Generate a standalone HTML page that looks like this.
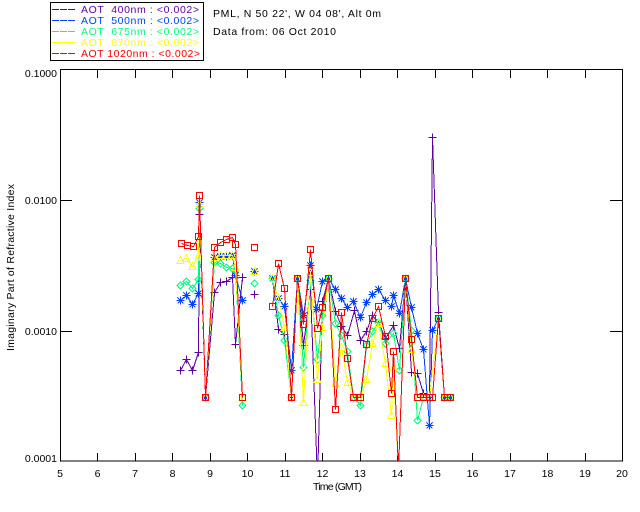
<!DOCTYPE html>
<html>
<head>
<meta charset="utf-8">
<style>
html,body{margin:0;padding:0;background:#fff;width:640px;height:512px;overflow:hidden}
svg{display:block;shape-rendering:crispEdges}
text{font-family:"Liberation Sans",sans-serif;font-size:10.5px;fill:#000;white-space:pre}
.d{fill:none;stroke-width:1}
</style>
</head>
<body>
<svg width="640" height="512" viewBox="0 0 640 512" xmlns="http://www.w3.org/2000/svg">
<defs>
<clipPath id="c"><rect x="60" y="70" width="562" height="391"/></clipPath>
<marker id="mp" markerUnits="userSpaceOnUse" markerWidth="11" markerHeight="11" refX="5.5" refY="5.5" overflow="visible"><path d="M1.5 5.5H9.5M5.5 1.5V9.5" fill="none" stroke="#5c00a0" stroke-width="1"/></marker>
<marker id="mb" markerUnits="userSpaceOnUse" markerWidth="11" markerHeight="11" refX="5.5" refY="5.5" overflow="visible"><path d="M1.5 5.5H9.5M5.5 1.5V9.5M2.5 2.5L8.5 8.5M8.5 2.5L2.5 8.5" fill="none" stroke="#0040ff" stroke-width="1"/></marker>
<marker id="mg" markerUnits="userSpaceOnUse" markerWidth="11" markerHeight="11" refX="5.5" refY="5.5" overflow="visible"><path d="M5.5 2L9 5.5L5.5 9L2 5.5Z" fill="none" stroke="#00ff80" stroke-width="1"/></marker>
<marker id="my" markerUnits="userSpaceOnUse" markerWidth="11" markerHeight="11" refX="5.5" refY="5.5" overflow="visible"><path d="M5.5 1.5L9 8.5H2Z" fill="none" stroke="#ffff00" stroke-width="1"/></marker>
<marker id="mr" markerUnits="userSpaceOnUse" markerWidth="11" markerHeight="11" refX="5.5" refY="5.5" overflow="visible"><path d="M2.5 2.5H8.5V8.5H2.5Z" fill="none" stroke="#ff0000" stroke-width="1"/></marker>
</defs>

<!-- legend -->
<rect x="50.5" y="2.5" width="153" height="58" fill="none" stroke="#000"/>
<g stroke-width="1" stroke-dasharray="7 1">
<path d="M52 9.5H75" stroke="#5c00a0"/>
<path d="M52 20.5H75" stroke="#0040ff"/>
<path d="M52 31.5H75" stroke="#00ff80"/>
<path d="M52 42.5H75" stroke="#ffff00"/>
<path d="M52 53.5H75" stroke="#ff0000"/>
</g>
<text x="81" y="13" style="fill:#5c00a0" textLength="118" lengthAdjust="spacing">AOT  400nm : &lt;0.002&gt;</text>
<text x="81" y="24" style="fill:#0040ff" textLength="118" lengthAdjust="spacing">AOT  500nm : &lt;0.002&gt;</text>
<text x="81" y="35" style="fill:#00ff80" textLength="118" lengthAdjust="spacing">AOT  675nm : &lt;0.002&gt;</text>
<text x="81" y="46" style="fill:#ffff00" textLength="118" lengthAdjust="spacing">AOT  870nm : &lt;0.002&gt;</text>
<text x="81" y="57" style="fill:#ff0000" textLength="119" lengthAdjust="spacing">AOT 1020nm : &lt;0.002&gt;</text>

<text x="213" y="17" textLength="168" lengthAdjust="spacing">PML, N 50 22', W 04 08', Alt 0m</text>
<text x="213" y="35" textLength="123" lengthAdjust="spacing">Data from: 06 Oct 2010</text>

<!-- axes -->
<g stroke="#000" stroke-width="1" fill="none">
<rect x="60.5" y="69.5" width="562" height="391.5"/>
<path d="M97.5 70v8M135.5 70v8M172.5 70v8M210.5 70v8M247.5 70v8M285.5 70v8M322.5 70v8M360.5 70v8M397.5 70v8M435.5 70v8M472.5 70v8M510.5 70v8M547.5 70v8M585.5 70v8"/>
<path d="M97.5 461v-8M135.5 461v-8M172.5 461v-8M210.5 461v-8M247.5 461v-8M285.5 461v-8M322.5 461v-8M360.5 461v-8M397.5 461v-8M435.5 461v-8M472.5 461v-8M510.5 461v-8M547.5 461v-8M585.5 461v-8"/>
<path d="M60 200.5h12M60 331.5h12M622 200.5h-12M622 331.5h-12"/>
</g>

<!-- y labels -->
<g text-anchor="end">
<text x="57" y="77">0.1000</text>
<text x="57" y="204">0.0100</text>
<text x="57" y="335">0.0010</text>
<text x="57" y="462">0.0001</text>
</g>
<!-- x labels -->
<g text-anchor="middle">
<text x="60" y="477">5</text><text x="97.5" y="477">6</text><text x="135" y="477">7</text><text x="172.5" y="477">8</text><text x="210" y="477">9</text><text x="247.5" y="477">10</text><text x="285" y="477">11</text><text x="322.5" y="477">12</text><text x="360" y="477">13</text><text x="397.5" y="477">14</text><text x="435" y="477">15</text><text x="472.5" y="477">16</text><text x="510" y="477">17</text><text x="547.5" y="477">18</text><text x="585" y="477">19</text><text x="622" y="477">20</text>
</g>
<text x="313" y="490" textLength="49" lengthAdjust="spacing">Time (GMT)</text>
<text transform="translate(14,351) rotate(-90)" textLength="167" lengthAdjust="spacing">Imaginary Part of Refractive Index</text>

<!-- data -->
<g clip-path="url(#c)">
<g transform="translate(0.5,0.5)">
<g class="d" stroke="#5c00a0" style="marker:url(#mp)">
<polyline points="180,370 186,359 192,370 198,352 199,214 205,397 214,292 220,282 226,281 232,277 235,344 242,277"/>
<polyline points="254,294 254.1,294"/>
<polyline points="272,278 278,329 284,334 291,397 297,278 303,345 310,289 317,480 322,301 328,278 335,311 341,326 347,335 354,310 360,340 366,331 372,315 378,322 385,338 393,325 399,348 405,278 411,372 417,373 423,393 429,397 432,137 438,312 444,397 450,397"/>
</g>
<g class="d" stroke="#0040ff" style="marker:url(#mb)">
<polyline points="180,300 186,295 192,304 198,293 199,202 205,397 214,257 220,256 226,256 232,255 235,275 242,300"/>
<polyline points="254,271 254.1,271"/>
<polyline points="272,278 278,298 284,306 291,370 297,278 303,315 310,265 316,309 322,281 328,278 335,289 341,298 347,307 353,301 360,317 366,302 372,294 378,289 385,300 391,306 393,295 399,313 405,278 411,307 417,333 423,349 429,425 432,330 438,318 444,397 450,397"/>
</g>
<g class="d" stroke="#00ff80" style="marker:url(#mg)">
<polyline points="180,285 186,281 192,288 198,279 199,208 205,397 214,262 220,263 226,267 232,268 235,270 242,405"/>
<polyline points="254,283 254.1,283"/>
<polyline points="272,278 278,315 284,340 291,397 297,278 303,367 310,280 317,359 322,315 328,278 335,323 341,335 347,351 353,397 360,405 366,345 372,331 378,322 385,343 393,333 399,370 405,278 411,330 417,420 423,397 429,397 438,318 444,397 450,397"/>
</g>
<g class="d" stroke="#ffff00" style="marker:url(#my)">
<polyline points="180,260 186,258 192,266 198,256 199,204 205,397 214,257 220,255 226,255 232,255 235,267 242,397"/>
<polyline points="254,271 254.1,271"/>
<polyline points="272,278 278,298 284,327 291,397 297,278 303,402 310,272 317,379 322,327 328,278 335,383 341,347 347,382 353,397 360,397 366,379 372,343 378,323 385,363 391,415 393,367 398,470 405,278 411,349 417,397 423,397 429,397 438,318 444,397 450,397"/>
</g>
<g class="d" stroke="#ff0000" style="marker:url(#mr)">
<polyline points="181,243 187,245 193,246 198,236 199,195 205,397 214,247 220,242 226,239 232,237 235,244 242,397"/>
<polyline points="254,247 254.1,247"/>
<polyline points="272,306 278,263 284,288 291,397 297,278 303,324 310,249 317,328 322,307 328,278 335,409 341,312 347,358 353,397 360,397 366,344 372,318 378,306 385,336 391,393 393,351 398,470 405,278 411,339 417,397 423,397 429,397 432,397 438,318 444,397 450,397"/>
</g>
</g>
</g>
</svg>
</body>
</html>
